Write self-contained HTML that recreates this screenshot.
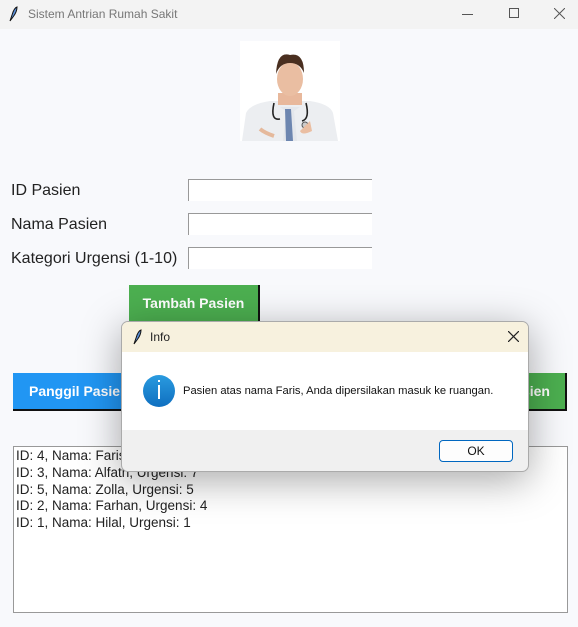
<!DOCTYPE html>
<html><head><style>
*{margin:0;padding:0;box-sizing:border-box}
body{width:578px;height:627px;background:#f8f9fc;font-family:"Liberation Sans",sans-serif;position:relative;overflow:hidden}
.abs{position:absolute}
.tb{left:0;top:0;width:578px;height:29px;background:#f3f3f3;color:#777;font-size:12px}
.lbl{left:11px;font-size:16px;color:#222}
.ent{left:188px;width:184px;height:22px;background:#fff;border-top:1px solid #999;border-left:1px solid #999}
.btn{color:#fff;font-weight:bold;font-size:14px;text-align:center;border-right:2px solid #111;border-bottom:2px solid #111}
.list{left:13px;top:446px;width:555px;height:167px;background:#fff;border:1px solid #999;font-size:13.5px;color:#222;padding:1px 2px;line-height:16.8px}
</style></head><body>
<div class="abs tb">
<svg class="abs" style="left:8px;top:6px" width="10" height="16" viewBox="0 0 10 16"><path d="M2 15 L4 9 Q6 2 9 1 Q9 6 5 11 Z" fill="#5b8fd8" stroke="#111" stroke-width="1"/></svg>
<div class="abs" style="left:28px;top:7px">Sistem Antrian Rumah Sakit</div>
<div class="abs" style="left:462px;top:14px;width:11px;height:1px;background:#555"></div>
<div class="abs" style="left:509px;top:8px;width:10px;height:10px;border:1px solid #555"></div>
<svg class="abs" style="left:554px;top:8px" width="11" height="11" viewBox="0 0 11 11"><path d="M0 0L11 11M11 0L0 11" stroke="#555" stroke-width="1"/></svg>
</div>
<svg class="abs" style="left:240px;top:41px" width="100" height="100" viewBox="0 0 100 100">
<rect width="100" height="100" fill="#fff"/>
<path d="M2 100 L6 72 Q10 63 30 60 L70 60 Q90 63 93 72 L98 100 Z" fill="#eceef1"/>
<path d="M40 66 L46 70 L43 100 L57 100 L54 70 L60 66" fill="#e4e7ec"/>
<path d="M45 68 L51 68 L53 100 L46 100 Z" fill="#6d86b0"/>
<rect x="38" y="52" width="24" height="12" fill="#e8b89c"/>
<ellipse cx="50" cy="38" rx="13" ry="17" fill="#eabea2"/>
<path d="M36 33 Q37 10 50 14 Q64 11 64 32 Q60 22 50 22 Q40 22 36 33Z" fill="#4a2f20"/>
<path d="M34 62 Q30 80 40 78 M66 62 Q70 78 62 80" stroke="#222" stroke-width="1.6" fill="none"/>
<circle cx="65" cy="84" r="3" fill="#ccc" stroke="#555"/>
<path d="M60 90 Q62 95 72 90 L70 80 Z" fill="#eabea2"/>
<path d="M20 88 Q25 92 34 95" stroke="#e5b99c" stroke-width="4"/>
</svg>
<div class="abs lbl" style="top:182px">ID Pasien</div>
<div class="abs lbl" style="top:216px">Nama Pasien</div>
<div class="abs lbl" style="top:250px">Kategori Urgensi (1-10)</div>
<div class="abs ent" style="top:179px"></div>
<div class="abs ent" style="top:213px"></div>
<div class="abs ent" style="top:247px"></div>
<div class="abs btn" style="left:129px;top:285px;width:131px;height:38px;background:#4caf50;line-height:37px">Tambah Pasien</div>
<div class="abs btn" style="left:13px;top:373px;width:150px;height:38px;background:#2196f3;line-height:37px;text-align:left;padding-left:16px">Panggil Pasien</div>
<div class="abs btn" style="left:420px;top:373px;width:147px;height:38px;background:#4caf50;line-height:37px;text-align:right;padding-right:15px">Hapus Pasien</div>
<div class="abs list">ID: 4, Nama: Faris, Urgensi: 9<br>ID: 3, Nama: Alfath, Urgensi: 7<br>ID: 5, Nama: Zolla, Urgensi: 5<br>ID: 2, Nama: Farhan, Urgensi: 4<br>ID: 1, Nama: Hilal, Urgensi: 1</div>
<div class="abs" style="left:121px;top:321px;width:408px;height:151px;border:1px solid #aaa;border-radius:7px;overflow:hidden;box-shadow:0 8px 40px rgba(0,0,0,.35);background:#f0f0f0">
<div class="abs" style="left:0;top:0;width:408px;height:30px;background:#f7f1de"></div>
<svg class="abs" style="left:10px;top:7px" width="10" height="16" viewBox="0 0 10 16"><path d="M2 15 L4 9 Q6 2 9 1 Q9 6 5 11 Z" fill="#5b8fd8" stroke="#111" stroke-width="1"/></svg>
<div class="abs" style="left:28px;top:8px;font-size:12px;color:#222">Info</div>
<svg class="abs" style="left:386px;top:9px" width="11" height="11" viewBox="0 0 11 11"><path d="M0 0L11 11M11 0L0 11" stroke="#222" stroke-width="1.2"/></svg>
<div class="abs" style="left:0;top:30px;width:408px;height:78px;background:#fff"></div>
<div class="abs" style="left:21px;top:53px;width:32px;height:32px;border-radius:50%;background:linear-gradient(#2a9be0,#0f6fc0)"></div>
<div class="abs" style="left:36px;top:63px;width:2px;height:14px;background:#fff"></div>
<div class="abs" style="left:36px;top:58px;width:2px;height:2px;background:#fff"></div>
<div class="abs" style="left:61px;top:63px;font-size:11.2px;color:#111">Pasien atas nama Faris, Anda dipersilakan masuk ke ruangan.</div>
<div class="abs" style="left:317px;top:118px;width:74px;height:22px;background:#fdfdfd;border:1px solid #0067c0;border-radius:4px;text-align:center;font-size:12px;line-height:20px;color:#111">OK</div>
</div>
</body></html>
